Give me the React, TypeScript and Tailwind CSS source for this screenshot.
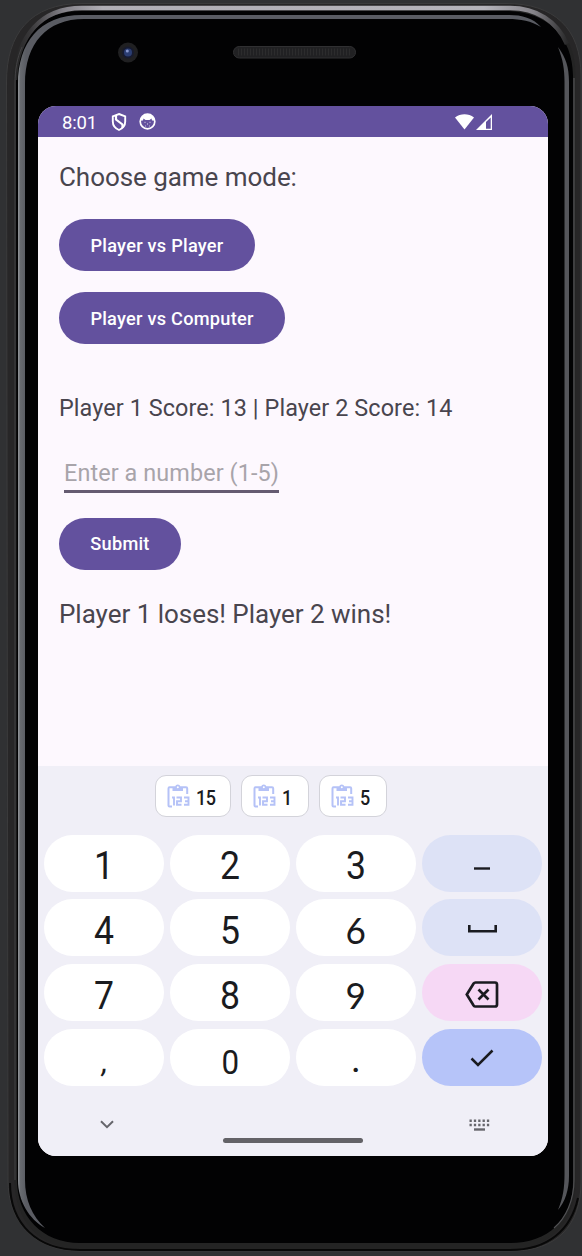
import type { ReactNode } from "react";

const cx = (...parts: string[]) => parts.join(" ");

function PhoneFrame() {
  return (
    <svg className="absolute inset-0" width="582" height="1256" viewBox="0 0 582 1256" fill="none">
      <defs>
        <linearGradient id="topRim" x1="14" y1="0" x2="567" y2="0" gradientUnits="userSpaceOnUse">
          <stop offset="0" stopColor="#242424" />
          <stop offset="0.03" stopColor="#39383a" />
          <stop offset="0.09" stopColor="#838188" />
          <stop offset="0.16" stopColor="#b0aeb5" />
          <stop offset="0.85" stopColor="#b5b3ba" />
          <stop offset="0.94" stopColor="#858389" />
          <stop offset="1" stopColor="#2a2a2b" />
        </linearGradient>
        <linearGradient id="glossLeft" x1="18" y1="0" x2="26" y2="0" gradientUnits="userSpaceOnUse">
          <stop offset="0" stopColor="#94979b" />
          <stop offset="0.3" stopColor="#686b70" />
          <stop offset="1" stopColor="#5a5c63" />
        </linearGradient>
      </defs>
      <path d="M6.500 82C6.500 34 30 3.500 82 3.500H506C554 3.500 581 28 581 76V1182C581 1226 556 1251 512 1251H80C34 1251 8 1222 8 1180Z" fill="#272627" stroke="#3b3b3c" />
      <path d="M14.500 84C14.500 35 37 7 82 7H506C548 7 575.500 32 575.500 76V1182C575.500 1222 550 1249 510 1249H80C39 1249 14.500 1220 14.500 1180Z" fill="#242424" />
      <path d="M16 84C16 38 38 11 82 11H506C546 11 573 36 573 76V1182C573 1220 548 1243 510 1243H80C42 1243 17 1216 17 1180Z" fill="#020203" />
      <path d="M15 80C17 36 41 8 82 8H510C536 8 557 21 567 44" stroke="url(#topRim)" strokeWidth="4.500" />
      <path d="M15 1180V84C15 70 17 58 22 47" stroke="#434244" strokeWidth="1" />
      <path d="M574 78V1180C574 1200 566 1218 554 1228" stroke="#505053" strokeWidth="1.200" />
      <path d="M10 1183C10 1224 37 1250 80 1250H510C548 1250 571 1230 578 1198" stroke="#080808" strokeWidth="2" />
      <path d="M18 84C18 43 39 15 82 15H509C522 15 533 18 541 27C531 21 521 19 508 19H84C47 19 25 43 25 84V1180C25 1200 32 1216 45 1228C29 1219 18 1201 18 1180Z" fill="url(#glossLeft)" />
      <path d="M558 47C566 58 569 67 569 82V1176C569 1190 565 1202 558 1210C563 1198 564.500 1188 564.500 1174V82C564.500 69 563 60 558 47Z" fill="#55565b" />
      <circle cx="128" cy="52.500" r="10" fill="#202022" />
      <circle cx="128" cy="52.500" r="6" fill="#171b30" />
      <circle cx="128" cy="52.500" r="4" fill="#2b3d72" />
      <circle cx="127.300" cy="51" r="1.500" fill="#8797ce" />
      <rect x="233.500" y="46.500" width="122" height="11.500" rx="5.700" fill="#212123" stroke="#303032" />
      <path d="M238 52H351" stroke="#444447" strokeWidth="7" strokeDasharray="1 2" opacity=".3" />
    </svg>
  );
}

function StatusBar() {
  return (
    <div className="flex h-[31px] items-center bg-[#63519e] pl-6 text-white">
      <span className="w-[49px] pt-[2px] text-[18.500px] leading-[22px] tracking-[-0.2px]">8:01</span>
      <svg width="16" height="18" viewBox="0 0 16 18" fill="none" stroke="currentColor" strokeWidth="1.900">
        <path d="M8 1 14.200 3.300V8.500C14.200 12.500 11.500 15.500 8 17C4.500 15.500 1.800 12.500 1.800 8.500V3.300Z" />
        <path d="M5 3V6.500L11.500 11.500V15" strokeWidth="2.200" />
      </svg>
      <svg className="ml-[12px]" width="17" height="17" viewBox="0 0 17 17" fill="none">
        <circle cx="8.500" cy="8.500" r="7.300" stroke="currentColor" strokeWidth="1.700" />
        <path d="M1.500 7.500C2 3.500 5 1.200 8.500 1.200S15 3.500 15.500 7.500L13 7.500L12.500 5.500L10.500 7H6.500L4.500 5.500L4 7.500Z" fill="currentColor" />
        <path d="M5.500 9.300h1M10.500 9.300h1M8 11h1M6 13h.8M10 13h.8" stroke="currentColor" strokeWidth=".8" />
      </svg>
      <svg className="ml-[299px]" width="38" height="18" viewBox="0 0 38 18">
        <path d="M0 4.500C5.500.2 13.500.2 19 4.500L9.500 16.500Z" fill="currentColor" />
        <path d="M37 1V17H21ZM35.700 4.500 31 9V15.700H35.700Z" fill="currentColor" fillRule="evenodd" />
      </svg>
    </div>
  );
}

function Pill({ children, className }: { children: ReactNode; className: string }) {
  return (
    <button className={cx("flex h-[52px] items-center justify-center rounded-full bg-[#63519e] pt-px text-[18.200px] font-medium tracking-[0.24px] whitespace-nowrap text-white", className)}>
      {children}
    </button>
  );
}

function Chip({ value, className }: { value: string; className: string }) {
  return (
    <button className={cx("flex h-[42px] items-center rounded-[11px] border border-[#d3d3da] bg-white pl-[11px] text-[#1a1b20]", className)}>
      <svg width="24" height="24" viewBox="0 0 24 24" fill="none" stroke="#b5c2f7">
        <path d="M5 22.500H2.500C1.800 22.500 1.500 22 1.500 21.500V4.500C1.500 3.800 2 3.300 2.500 3.300H19C19.800 3.300 20.200 3.800 20.200 4.500V10" strokeWidth="2" />
        <path d="M5.500 3H8.300C8.500 1.200 9.500.5 10.800.5S13 1.200 13.300 3H16V7H5.500Z" fill="#b5c2f7" stroke="none" />
        <circle cx="10.800" cy="3.200" r="1" fill="#fff" stroke="none" />
        <path d="M5 13.500H7V21.500M9.500 13.500H14V17.200H10V20.800H14.500M17 13.500H21.500V20.800H17M18 17.200H21.500" strokeWidth="1.900" />
      </svg>
      <span className="ml-[5px] origin-left scale-x-90 pt-[3px] text-[20px] font-medium tracking-[-0.6px]">{value}</span>
    </button>
  );
}

function Key({ children, className = "bg-white" }: { children?: ReactNode; className?: string }) {
  return (
    <button className={cx("flex h-[57px] items-center justify-center rounded-[28.500px] text-[#1a1b20]", className)}>
      {children}
    </button>
  );
}

const digit = "text-[39.500px] leading-[57px] pt-[5px] scale-x-90";
const round = "font-['Lato'] text-[37px] leading-[57px] pt-[3px] scale-x-95";

export default function App() {
  return (
    <div className="relative h-[1256px] w-[582px] overflow-hidden bg-[#303133] font-['Roboto',sans-serif]">
      <PhoneFrame />
      <div className="relative pt-[106px] pl-[38px]">
        <main className="flex h-[1050px] w-[510px] flex-col overflow-hidden rounded-[18px] bg-[#fdf8fe] text-[#49454e]">
          <StatusBar />
          <section className="flex h-[629px] flex-col items-start pl-[21px]">
            <h1 className="mt-[24px] h-[32px] text-[26px] leading-[32px] tracking-[-0.05px] whitespace-nowrap">Choose game mode:</h1>
            <Pill className="mt-[26px] w-[196px]">Player vs Player</Pill>
            <Pill className="mt-[21px] w-[226px]">Player vs Computer</Pill>
            <p className="mt-[50px] h-[28px] text-[23.400px] leading-[28px] tracking-[0.09px] whitespace-nowrap">Player 1 Score: 13 | Player 2 Score: 14</p>
            <div className="mt-[34px] ml-[5px] h-[37px] w-[215px] border-b-[3px] border-[#655b71] text-[23.400px] leading-[34px] tracking-[0.1px] whitespace-nowrap text-[#a8a4aa]">Enter a number (1-5)</div>
            <Pill className="mt-[24.500px] w-[122px]">Submit</Pill>
            <p className="mt-[28.500px] h-[32px] text-[26px] leading-[32px] tracking-[-0.03px] whitespace-nowrap">Player 1 loses! Player 2 wins!</p>
          </section>
          <section className="flex flex-1 flex-col bg-[#f0eff7]">
            <div className="mt-[9px] flex gap-[10px] pl-[117px]">
              <Chip value="15" className="w-[76px]" />
              <Chip value="1" className="w-[68px]" />
              <Chip value="5" className="w-[68px]" />
            </div>
            <div className="mt-[17.800px] grid grid-cols-[repeat(4,120px)] gap-x-[6px] gap-y-[7.650px] pl-[6px]">
              <Key><span className={digit}>1</span></Key>
              <Key><span className={digit}>2</span></Key>
              <Key><span className={digit}>3</span></Key>
              <Key className="bg-[#dde2f6]">
                <svg className="mt-[11px]" width="16" height="3"><path d="M0 1.500H16" stroke="currentColor" strokeWidth="2.400" /></svg>
              </Key>
              <Key><span className={digit}>4</span></Key>
              <Key><span className={digit}>5</span></Key>
              <Key><span className={round}>6</span></Key>
              <Key className="bg-[#dde2f6]">
                <svg className="mt-[3px]" width="29" height="8" fill="none" stroke="currentColor" strokeWidth="2.600"><path d="M1.300 0V6.300H27.700V0" /></svg>
              </Key>
              <Key><span className={digit}>7</span></Key>
              <Key><span className={digit}>8</span></Key>
              <Key><span className={round}>9</span></Key>
              <Key className="bg-[#f6d8f5]">
                <svg className="mt-[3px]" width="34" height="27" viewBox="0 0 34 27" fill="none" stroke="currentColor" strokeWidth="2.700">
                  <path d="M10.500 1.500H30C31.300 1.500 32 2.300 32 3.500V23.500C32 24.700 31.300 25.500 30 25.500H10.500C9.700 25.500 9 25 8.600 24.400L1.800 13.500L8.600 2.600C9 2 9.700 1.500 10.500 1.500Z" />
                  <path d="M13.500 8.500 23.500 18.500M23.500 8.500 13.500 18.500" />
                </svg>
              </Key>
              <Key><span className="-skew-x-6 pt-[8px] pl-[2px] text-[31px] leading-[57px]">,</span></Key>
              <Key><span className="scale-x-95 pt-[11px] text-[33px] leading-[57px]">0</span></Key>
              <Key><span className="pt-[5px] text-[39px] leading-[57px]">.</span></Key>
              <Key className="bg-[#b6c4f9]">
                <svg className="mt-px" width="24" height="18" viewBox="0 0 24 18" fill="none" stroke="currentColor" strokeWidth="2.500"><path d="M1.500 9.500 8 16 22.500 1.500" /></svg>
              </Key>
            </div>
            <div className="mt-[30px] flex items-start pl-[62px] text-[#66666c]">
              <svg className="mt-[4px]" width="14" height="9" fill="none" stroke="currentColor" strokeWidth="2"><path d="M1 1.200 7 7.200 13 1.200" /></svg>
              <div className="mt-[22px] ml-[109px] h-[5px] w-[140px] rounded-full bg-[#636267]" />
              <svg className="mt-[3px] ml-[106px]" width="22" height="13" fill="none" stroke="currentColor" strokeWidth="2.400"><path d="M.5 1.700H21M.5 6H21" strokeDasharray="2.300 2.050" /><path d="M5 10.500H16" /></svg>
            </div>
          </section>
        </main>
      </div>
    </div>
  );
}
